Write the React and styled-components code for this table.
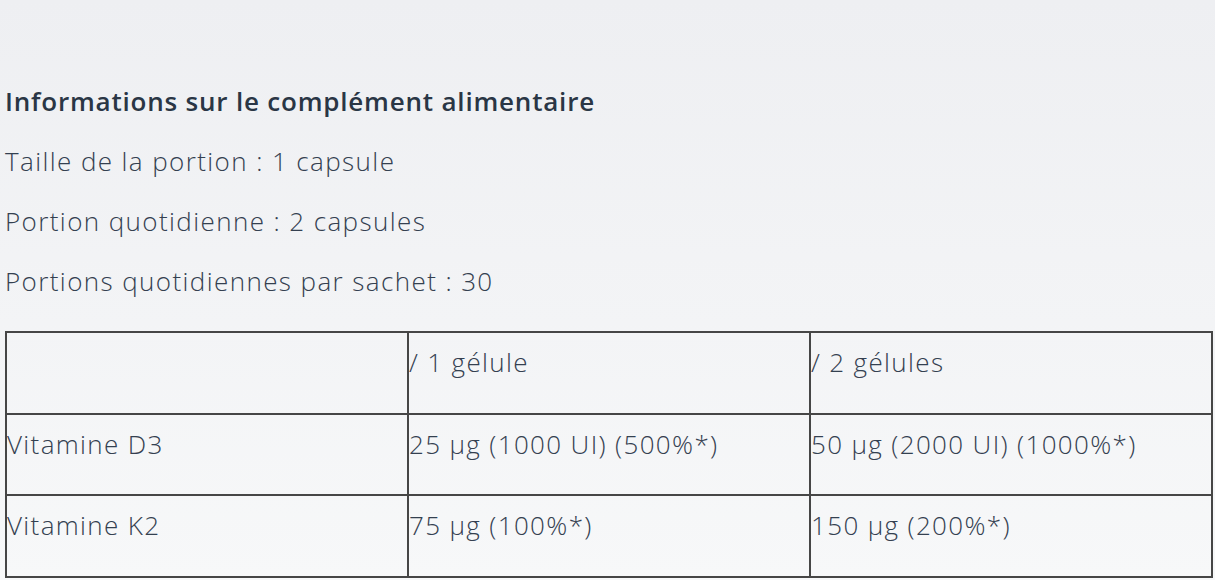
import React from "react";
import styled, { createGlobalStyle } from "styled-components";

const GlobalStyle = createGlobalStyle`
  html, body {
    margin: 0;
    padding: 0;
  }
  body {
    background: linear-gradient(180deg, #eeeff2 0%, #f7f8f9 100%);
    min-height: 580px;
    font-family: "Open Sans", "Noto Sans", sans-serif;
  }
`;

const Page = styled.div`
  padding: 84px 2px 0 5px;
  height: 580px;
  box-sizing: border-box;
  overflow: hidden;
`;

const Heading = styled.h3`
  margin: 0 0 26px;
  font-size: 26px;
  line-height: 34px;
  font-weight: 600;
  letter-spacing: 0.8px;
  color: #2a3645;
`;

const Line = styled.p`
  margin: 0 0 26px;
  font-size: 26px;
  line-height: 34px;
  font-weight: 300;
  letter-spacing: 1.4px;
  color: #344050;
`;

const Table = styled.table`
  width: 100%;
  margin-top: 33px;
  border-collapse: collapse;
  table-layout: fixed;
`;

const Cell = styled.td`
  border: 2px solid #464646;
  height: 81.5px;
  box-sizing: border-box;
  padding: 12px 0 0 0;
  vertical-align: top;
  font-size: 26px;
  line-height: 34px;
  font-weight: 300;
  letter-spacing: 1.35px;
  color: #344050;
`;

const rows = [
  ["", "/ 1 gélule", "/ 2 gélules"],
  ["Vitamine D3", "25 µg (1000 UI) (500%*)", "50 µg (2000 UI) (1000%*)"],
  ["Vitamine K2", "75 µg (100%*)", "150 µg (200%*)"],
];

const App = () => {
  return (
    <>
      <GlobalStyle />
      <Page>
        <Heading>Informations sur le complément alimentaire</Heading>
        <Line>Taille de la portion : 1 capsule</Line>
        <Line>Portion quotidienne : 2 capsules</Line>
        <Line>Portions quotidiennes par sachet : 30</Line>
        <Table>
          <tbody>
            {rows.map((row, i) => (
              <tr key={i}>
                {row.map((c, j) => (
                  <Cell key={j}>{c}</Cell>
                ))}
              </tr>
            ))}
          </tbody>
        </Table>
      </Page>
    </>
  );
};

export default App;
